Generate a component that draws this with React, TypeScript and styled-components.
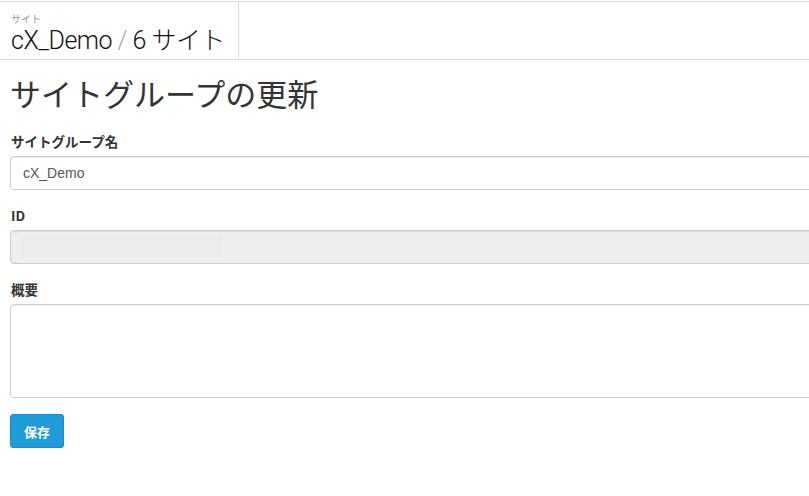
import React from "react";
import styled, { createGlobalStyle } from "styled-components";

const GlobalStyle = createGlobalStyle`
  html, body {
    margin: 0;
    padding: 0;
    background: #ffffff;
  }
  body {
    font-family: "Liberation Sans", "Noto Sans CJK JP", sans-serif;
    color: #333333;
  }
`;

const Page = styled.div`
  width: 809px;
  height: 496px;
  overflow: hidden;
  padding-top: 1px;
  box-sizing: border-box;
`;

const Header = styled.header`
  display: flex;
  height: 59px;
  border-top: 1px solid #dddddd;
  border-bottom: 1px solid #dddddd;
  box-sizing: border-box;
`;

const HeaderCell = styled.div`
  width: 239px;
  border-right: 1px solid #dddddd;
  padding: 11px 0 0 11px;
  box-sizing: border-box;
`;

const Caption = styled.div`
  font-family: "Noto Sans CJK JP", sans-serif;
  font-size: 10px;
  line-height: 12px;
  color: #999999;
`;

const Crumb = styled.div`
  margin-top: 1px;
  font-family: Roboto, "Noto Sans CJK JP", sans-serif;
  font-weight: 300;
  font-size: 25px;
  line-height: 30px;
  letter-spacing: -0.5px;
  color: #111111;
  white-space: nowrap;
`;

const Slash = styled.span`
  color: #aaaaaa;
`;

const Main = styled.main`
  padding: 0 0 0 10px;
`;

const Title = styled.h1`
  font-family: "Noto Sans CJK JP", sans-serif;
  font-weight: 400;
  font-size: 31px;
  line-height: 40px;
  margin: 13px 0 20px 0;
  color: #333333;
`;

const Field = styled.div`
  margin-bottom: 17px;
`;

const Label = styled.label`
  display: block;
  font-family: "Noto Sans CJK JP", sans-serif;
  font-weight: 700;
  font-size: 13.5px;
  line-height: 16px;
  margin: 0 0 7px 1px;
  color: #333333;
`;

const Input = styled.div<{ disabled?: boolean }>`
  height: 34px;
  width: 820px;
  box-sizing: border-box;
  border: 1px solid #cccccc;
  border-radius: 4px;
  background: ${({ disabled }) => (disabled ? "#eeeeee" : "#ffffff")};
  box-shadow: inset 0 1px 1px rgba(0, 0, 0, 0.075);
  padding: 0 12px;
  display: flex;
  align-items: center;
  font-family: "Liberation Sans", sans-serif;
  font-size: 14px;
  color: #555555;
`;

const Masked = styled.div`
  width: 201px;
  height: 22px;
  background: #ebebeb;
  margin-left: -2px;
`;

const TextArea = styled.div`
  height: 94px;
  width: 820px;
  box-sizing: border-box;
  border: 1px solid #cccccc;
  border-radius: 4px;
  box-shadow: inset 0 1px 1px rgba(0, 0, 0, 0.075);
`;

const SaveButton = styled.button`
  margin-top: -1px;
  width: 54px;
  height: 34px;
  border: 1px solid #1a8ac2;
  border-radius: 3px;
  background: #1e9cd7;
  color: #ffffff;
  font-family: "Noto Sans CJK JP", sans-serif;
  font-weight: 700;
  font-size: 13px;
  padding: 0;
`;

export default function App() {
  return (
    <>
      <GlobalStyle />
      <Page>
        <Header>
          <HeaderCell>
            <Caption>サイト</Caption>
            <Crumb>
              cX_Demo <Slash>/</Slash> 6 サイト
            </Crumb>
          </HeaderCell>
        </Header>
        <Main>
          <Title>サイトグループの更新</Title>
          <Field>
            <Label>サイトグループ名</Label>
            <Input>cX_Demo</Input>
          </Field>
          <Field>
            <Label>ID</Label>
            <Input disabled>
              <Masked />
            </Input>
          </Field>
          <Field>
            <Label>概要</Label>
            <TextArea />
          </Field>
          <SaveButton>保存</SaveButton>
        </Main>
      </Page>
    </>
  );
}
